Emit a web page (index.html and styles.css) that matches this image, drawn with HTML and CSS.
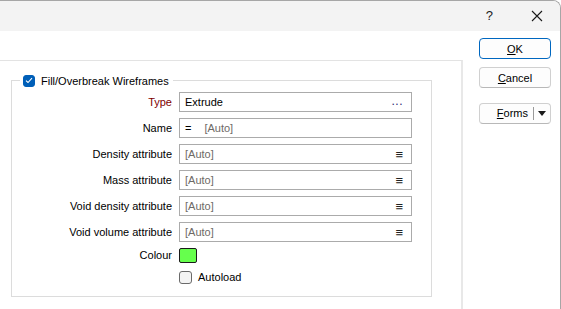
FILE: index.html
```html
<!DOCTYPE html>
<html lang="en">
<head>
  <meta charset="UTF-8" />
  <title>Fill/Overbreak Wireframes</title>
  <link rel="stylesheet" href="styles.css">
</head>
<body>
  <div class="window">
    <header class="titlebar">
      <span class="help">?</span>
      <svg class="close" width="12" height="12" viewBox="0 0 12 12">
        <path d="M1 1 L11 11 M11 1 L1 11" stroke="#1a1a1a" stroke-width="1.1" fill="none"/>
      </svg>
    </header>

    <div class="body">
      <section class="panel">
        <div class="group">
          <div class="group-title">
            <span class="check on">
              <svg width="8" height="7" viewBox="0 0 8 7"><path d="M1 3.6 L3 5.5 L7 1.2" stroke="#fff" stroke-width="1.1" fill="none"/></svg>
            </span>
            <span>Fill/Overbreak Wireframes</span>
          </div>

          <div class="form">
            <label class="req">Type</label>
            <div class="field"><span class="val">Extrude</span><span class="dots">...</span></div>

            <label>Name</label>
            <div class="field"><span class="eq">=</span><span class="auto">[Auto]</span></div>

            <label>Density attribute</label>
            <div class="field"><span class="auto">[Auto]</span><span class="menu">&#8801;</span></div>

            <label>Mass attribute</label>
            <div class="field"><span class="auto">[Auto]</span><span class="menu">&#8801;</span></div>

            <label>Void density attribute</label>
            <div class="field"><span class="auto">[Auto]</span><span class="menu">&#8801;</span></div>

            <label>Void volume attribute</label>
            <div class="field"><span class="auto">[Auto]</span><span class="menu">&#8801;</span></div>

            <label class="short">Colour</label>
            <div class="short"><span class="swatch"></span></div>

            <span class="tall"></span>
            <div class="tall autoload"><span class="check"></span><span>Autoload</span></div>
          </div>
        </div>
      </section>

      <aside class="buttons">
        <button class="btn default"><u>O</u>K</button>
        <button class="btn"><u>C</u>ancel</button>
        <button class="btn split">
          <span class="split-label"><u>F</u>orms</span>
          <span class="split-arrow">
            <svg width="8" height="5" viewBox="0 0 8 5"><path d="M0 0 H8 L4 5 Z" fill="#1a1a1a"/></svg>
          </span>
        </button>
      </aside>
    </div>
  </div>
</body>
</html>
```

FILE: styles.css
```css
* {
  box-sizing: border-box;
}

body {
  margin: 0;
  font-family: "Liberation Sans", Arial, sans-serif;
  font-size: 11px;
  color: #000;
  background: #fff;
}

.window {
  width: 561px;
  height: 309px;
  border-top: 1px solid #a6a6a6;
  border-right: 1px solid #a6a6a6;
  border-top-right-radius: 8px;
  overflow: hidden;
  background: #fff;
}

.titlebar {
  height: 30px;
  background: #f3f3f3;
  display: flex;
  align-items: center;
  justify-content: flex-end;
  padding-right: 17px;
  gap: 38px;
}

.help {
  font-size: 13px;
  color: #1a1a1a;
  margin-top: -1px;
}

.body {
  display: flex;
  height: 278px;
}

.panel {
  width: 463px;
  margin-top: 29px;
  border-top: 1px solid #e3e3e3;
  border-right: 2px solid #e8e8e8;
  padding: 19px 0 0 11px;
}

.group {
  width: 421px;
  height: 217px;
  border: 1px solid #dcdcdc;
}

.group-title {
  display: flex;
  align-items: center;
  gap: 6px;
  width: max-content;
  height: 17px;
  margin: -9px 0 0 8px;
  padding: 0 4px 0 3px;
  background: #fff;
}

.check {
  width: 13px;
  height: 13px;
  border: 1px solid #6a6a6a;
  border-radius: 3px;
  background: #f4f4f4;
  display: inline-flex;
  align-items: center;
  justify-content: center;
}

.check.on {
  width: 12px;
  height: 12px;
  border-color: #005fb8;
  background: #005fb8;
}

.form {
  display: grid;
  grid-template-columns: 160px 233px;
  grid-auto-rows: 20px;
  column-gap: 7px;
  row-gap: 6px;
  margin-top: 3px;
}

.form label {
  text-align: right;
  line-height: 20px;
  white-space: nowrap;
}

.form .req {
  color: #800000;
}

.form .short {
  height: 15px;
  line-height: 15px;
}

.form .tall {
  margin-top: -7px;
}

.field {
  border: 1px solid #ababab;
  display: flex;
  align-items: center;
  padding: 0 8px 0 5px;
}

.val {
  flex: 1;
}

.eq {
  margin-right: 13px;
}

.auto {
  flex: 1;
  color: #6e6a66;
}

.dots {
  color: #2a1a70;
  font-size: 12px;
  letter-spacing: 0.5px;
  margin-top: -3px;
}

.menu {
  font-size: 13px;
  color: #222;
}

.swatch {
  display: block;
  width: 18px;
  height: 15px;
  background: #66ff4d;
  border: 1px solid #1a1a1a;
  border-radius: 2px;
}

.autoload {
  display: flex;
  align-items: center;
  gap: 6px;
  height: 20px;
}

.buttons {
  display: flex;
  flex-direction: column;
  padding: 7px 0 0 16px;
  gap: 8px;
}

.btn {
  width: 72px;
  height: 21px;
  font-family: inherit;
  font-size: 11px;
  color: #000;
  background: #fdfdfd;
  border: 1px solid #d0d0d0;
  border-bottom-color: #b8b8b8;
  border-radius: 4px;
  padding: 0;
  line-height: 18px;
}

.btn.default {
  border: 1px solid #0067c0;
}

.btn.split {
  margin-top: 7px;
  display: flex;
  align-items: center;
}

.split-label {
  flex: 1;
  text-align: right;
  padding-right: 5px;
  border-right: 1px solid #9a9a9a;
  line-height: 13px;
}

.split-arrow {
  width: 16px;
  display: flex;
  justify-content: center;
}
```
